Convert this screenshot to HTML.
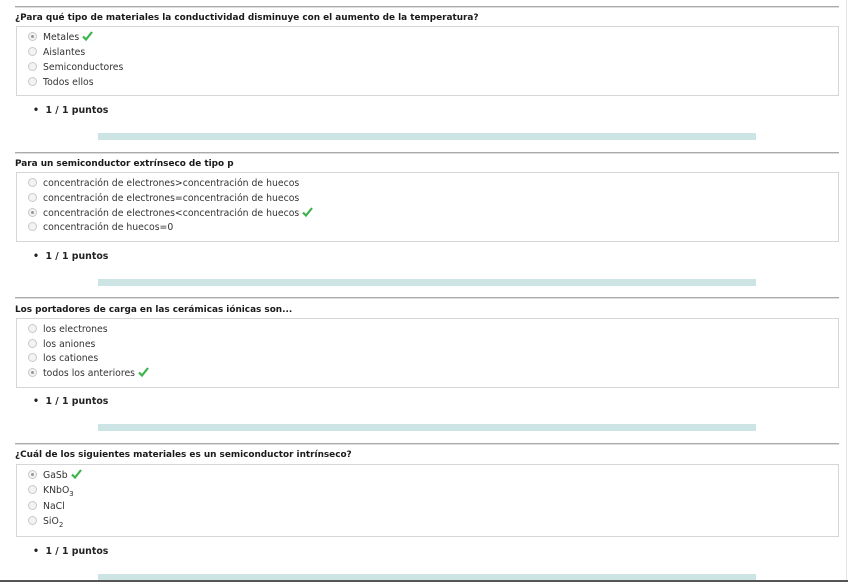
<!DOCTYPE html>
<html><head><meta charset="utf-8"><style>
body{margin:0;width:848px;height:582px;background:#fff;position:relative;overflow:hidden;font-family:"DejaVu Sans","Liberation Sans",sans-serif;color:#222}
.a{position:absolute}
.hr{position:absolute;left:15px;width:824px;height:1px;background:#aaa;border-bottom:1px solid #ddd}
.q{position:absolute;left:15px;font-size:8.9px;font-weight:bold;white-space:nowrap;line-height:12px;color:#1a1a1a}
.box{position:absolute;left:16px;width:821px;border:1px solid #d6d6d6}
.opt{position:absolute;left:28px;font-size:9.3px;white-space:nowrap;color:#333;line-height:12px;height:12px}
.r{display:inline-block;width:7px;height:7px;border:1px solid #c8c8c8;border-radius:50%;background:#f3f3f3;vertical-align:-1px;margin-right:6px;position:relative}
.r.s::after{content:"";position:absolute;left:2px;top:2px;width:3px;height:3px;border-radius:50%;background:#999}
.ck{display:inline-block;width:11px;height:10px;margin-left:3px;vertical-align:top;position:relative;top:-1px}
.pt{position:absolute;left:33px;font-size:9.4px;font-weight:bold;white-space:nowrap;line-height:12px}
.bar{position:absolute;left:98px;width:658px;height:7px;background:#cde4e4}
sub{font-size:7px;vertical-align:-3px;line-height:0}
</style></head><body>
<svg width="0" height="0" style="position:absolute"><defs><symbol id="c" viewBox="0 0 11 10"><path d="M1 5.5 L4 8.5 L10 1" fill="none" stroke="#3cb44b" stroke-width="2.2"/></symbol></defs></svg>
<div class="a" style="left:846px;top:0;width:1px;height:582px;background:#e4e4e4"></div>

<div class="hr" style="top:6px"></div>
<div class="q" style="top:12px">¿Para qué tipo de materiales la conductividad disminuye con el aumento de la temperatura?</div>
<div class="box" style="top:26px;height:68px"></div>
<div class="opt" style="top:32px"><span class="r s"></span>Metales<svg class="ck"><use href="#c"/></svg></div>
<div class="opt" style="top:47px"><span class="r"></span>Aislantes</div>
<div class="opt" style="top:62px"><span class="r"></span>Semiconductores</div>
<div class="opt" style="top:77px"><span class="r"></span>Todos ellos</div>
<div class="pt" style="top:105px">•&nbsp;&nbsp;1 / 1 puntos</div>
<div class="bar" style="top:133px"></div>

<div class="hr" style="top:152px"></div>
<div class="q" style="top:158px">Para un semiconductor extrínseco de tipo p</div>
<div class="box" style="top:172px;height:68px"></div>
<div class="opt" style="top:178px"><span class="r"></span>concentración de electrones&gt;concentración de huecos</div>
<div class="opt" style="top:193px"><span class="r"></span>concentración de electrones=concentración de huecos</div>
<div class="opt" style="top:208px"><span class="r s"></span>concentración de electrones&lt;concentración de huecos<svg class="ck"><use href="#c"/></svg></div>
<div class="opt" style="top:222px"><span class="r"></span>concentración de huecos=0</div>
<div class="pt" style="top:251px">•&nbsp;&nbsp;1 / 1 puntos</div>
<div class="bar" style="top:279px"></div>

<div class="hr" style="top:297px"></div>
<div class="q" style="top:304px">Los portadores de carga en las cerámicas iónicas son...</div>
<div class="box" style="top:318px;height:68px"></div>
<div class="opt" style="top:324px"><span class="r"></span>los electrones</div>
<div class="opt" style="top:339px"><span class="r"></span>los aniones</div>
<div class="opt" style="top:353px"><span class="r"></span>los cationes</div>
<div class="opt" style="top:368px"><span class="r s"></span>todos los anteriores<svg class="ck"><use href="#c"/></svg></div>
<div class="pt" style="top:396px">•&nbsp;&nbsp;1 / 1 puntos</div>
<div class="bar" style="top:424px"></div>

<div class="hr" style="top:443px"></div>
<div class="q" style="top:449px">¿Cuál de los siguientes materiales es un semiconductor intrínseco?</div>
<div class="box" style="top:464px;height:71px"></div>
<div class="opt" style="top:470px"><span class="r s"></span>GaSb<svg class="ck"><use href="#c"/></svg></div>
<div class="opt" style="top:485px"><span class="r"></span>KNbO<sub>3</sub></div>
<div class="opt" style="top:501px"><span class="r"></span>NaCl</div>
<div class="opt" style="top:516px"><span class="r"></span>SiO<sub>2</sub></div>
<div class="pt" style="top:546px">•&nbsp;&nbsp;1 / 1 puntos</div>
<div class="bar" style="top:574px"></div>
<div class="a" style="left:0;top:580px;width:848px;height:2px;background:#555"></div>
</body></html>
